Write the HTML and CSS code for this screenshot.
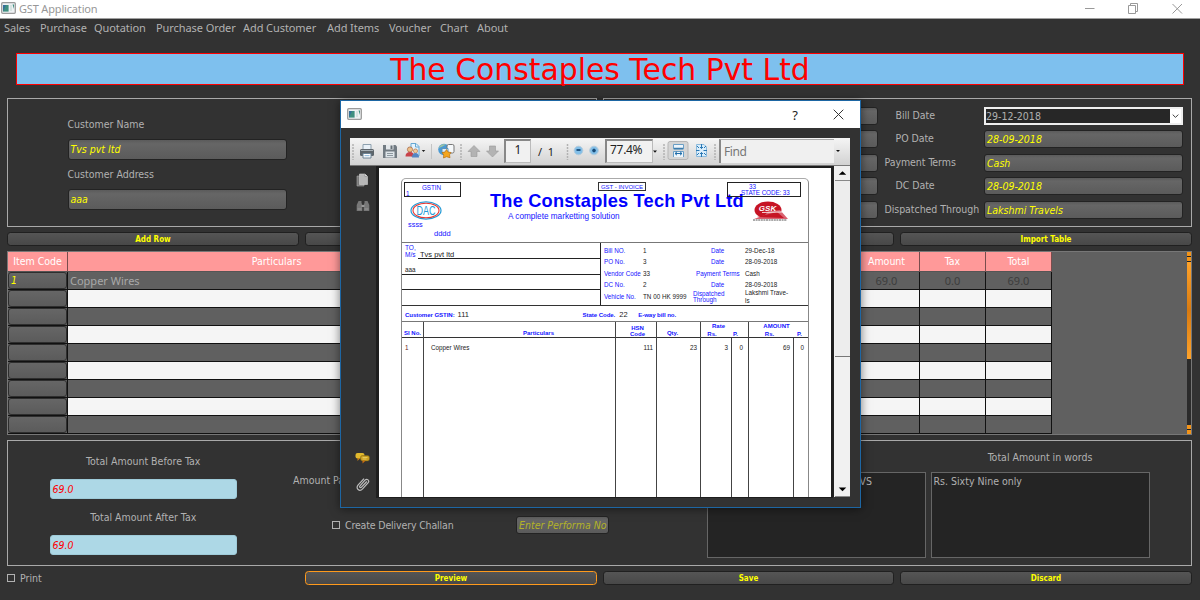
FILE: index.html
```html
<!DOCTYPE html>
<html lang="en">
<head>
<meta charset="utf-8">
<title>GST Application</title>
<link rel="stylesheet" href="styles.css">
</head>
<body>
<header class="titlebar">
  <svg class="appicon" width="15" height="12" viewBox="0 0 15 12"><rect x=".7" y=".7" width="13.6" height="10.6" rx="1" fill="#eef1f3" stroke="#9b9b9b" stroke-width="1.3"/><rect x="2" y="3" width="5.6" height="6.6" fill="#3f8f80"/><path d="M2 9.600L2 3L5 3Z" fill="#356f9a"/><path d="M9 3H11V9H9Z" fill="#d6e3e1"/><path d="M11.500 2.500H13V7Z" fill="#3f8f80"/></svg>
  <span class="apptitle">GST Application</span>
  <svg class="winbtns" width="100" height="14" viewBox="0 0 100 14" fill="none" stroke="#999" stroke-width="1"><path d="M1 6.500H10.500" stroke-width="1"/><path d="M44.500 3.500H51.500V11.500H44.500ZM46.500 3V1.500H53.500V9.500H52"/><path d="M88.500 2L98 11.500M98 2L88.500 11.500"/></svg>
</header>
<nav class="menu"><span>Sales</span><span>Purchase</span><span>Quotation</span><span>Purchase Order</span><span>Add Customer</span><span>Add Items</span><span>Voucher</span><span>Chart</span><span>About</span></nav>
<main class="app">
  <h1 class="banner">The Constaples Tech Pvt Ltd</h1>
  <section class="forms">
    <div class="group customer">
      <label>Customer Name</label><div class="field">Tvs pvt ltd</div>
      <label>Customer Address</label><div class="field">aaa</div>
    </div>
    <div class="group bill">
      <div class="field"></div><label class="in">Bill Date</label><div class="date"><span>29-12-2018</span><svg width="11" height="15" viewBox="0 0 11 15"><path d="M2.500 6L5.500 9L8.500 6" fill="none" stroke="#333"/></svg></div>
      <div class="field"></div><label class="in">PO Date</label><div class="field">28-09-2018</div>
      <div class="field"></div><label>Payment Terms</label><div class="field">Cash</div>
      <div class="field"></div><label class="in">DC Date</label><div class="field">28-09-2018</div>
      <div class="field"></div><label class="wide">Dispatched Through</label><div class="field">Lakshmi Travels</div>
    </div>
  </section>
  <div class="buttons"><button>Add Row</button><button></button><button></button><button>Import Table</button></div>
  <section class="tablebox">
    <table class="items">
      <colgroup><col class="c1"><col class="c2"><col class="c3"><col class="c4"><col class="c5"><col class="c5"></colgroup>
      <thead><tr><th class="code">Item Code</th><th>Particulars</th><th></th><th class="amt">Amount</th><th>Tax</th><th>Total</th></tr></thead>
      <tbody>
        <tr><td><div class="cell">1</div></td><td class="name">Copper Wires</td><td></td><td class="num amt">69.0</td><td class="num">0.0</td><td class="num">69.0</td></tr>
        <tr><td><div class="cell"></div></td><td></td><td></td><td></td><td></td><td></td></tr>
        <tr><td><div class="cell"></div></td><td></td><td></td><td></td><td></td><td></td></tr>
        <tr><td><div class="cell"></div></td><td></td><td></td><td></td><td></td><td></td></tr>
        <tr><td><div class="cell"></div></td><td></td><td></td><td></td><td></td><td></td></tr>
        <tr><td><div class="cell"></div></td><td></td><td></td><td></td><td></td><td></td></tr>
        <tr><td><div class="cell"></div></td><td></td><td></td><td></td><td></td><td></td></tr>
        <tr><td><div class="cell"></div></td><td></td><td></td><td></td><td></td><td></td></tr>
        <tr><td><div class="cell"></div></td><td></td><td></td><td></td><td></td><td></td></tr>
      </tbody>
    </table>
    <div class="vbar"><i class="end"></i><i class="thumb"></i><i class="track"></i><i class="end"></i></div>
  </section>
  <section class="group totals">
    <div class="sums">
      <label>Total Amount Before Tax</label><div class="field blue">69.0</div>
      <label>Total Amount After Tax</label><div class="field blue">69.0</div>
    </div>
    <div class="paid">
      <label>Amount Pa</label>
      <div class="challan"><i class="check"></i><span>Create Delivery Challan</span><div class="field hint">Enter Performa No</div></div>
    </div>
    <div class="words"><label></label><div class="area vs">VS</div></div>
    <div class="words"><label>Total Amount in words</label><div class="area">Rs. Sixty Nine only</div></div>
  </section>
  <div class="buttons foot"><div class="print"><i class="check"></i><span>Print</span></div><button class="active">Preview</button><button>Save</button><button>Discard</button></div>
</main>

<div class="dialog">
  <div class="dtitle">
    <svg class="appicon" width="15" height="12" viewBox="0 0 15 12"><rect x=".7" y=".7" width="13.6" height="10.6" rx="1" fill="#eef1f3" stroke="#9b9b9b" stroke-width="1.3"/><rect x="2" y="3" width="5.6" height="6.600" fill="#3f8f80"/><path d="M2 9.600L2 3L5 3Z" fill="#356f9a"/><path d="M9 3H11V9H9Z" fill="#d6e3e1"/><path d="M11.500 2.500H13V7Z" fill="#3f8f80"/></svg>
    <span class="q">?</span>
    <svg width="11" height="11" viewBox="0 0 11 11"><path d="M.7 .7L10.300 10.300M10.300 .7L.7 10.300" stroke="#333" stroke-width="1"/></svg>
  </div>
  <div class="viewer">
    <div class="toolbar">
      <svg class="tools" width="154" height="27" viewBox="0 0 154 27">
        <path d="M3 6V22M111 6V22" stroke="#b2b2b2" stroke-width="1.500" stroke-dasharray="2 1"/><path d="M81.500 6V21" stroke="#c4c4c4"/>
        <path d="M13 6.500H21V12H13Z" fill="#e9f1f8" stroke="#8da0ae"/><rect x="10" y="11" width="14" height="7" rx="1.500" fill="#5d656b"/><path d="M11 12.500H23" stroke="#a6afb5"/><path d="M13 15.500H21V20H13Z" fill="#fff" stroke="#6c8497"/><path d="M14.500 17.700H19.500" stroke="#83b2d8"/>
        <path d="M33 7H45.500L47 8.500V20H33Z" fill="#727b82"/><rect x="36" y="7" width="7.500" height="4.500" fill="#e4e8eb"/><rect x="40.500" y="7.500" width="2" height="3.500" fill="#677077"/><rect x="35.500" y="13.500" width="9" height="6" fill="#dfe5e9"/><path d="M37 15.500H43M37 17.500H43" stroke="#8d989f"/>
        <path d="M61 5.500H66L69 8.500V18H61Z" fill="#e4f3fd" stroke="#65a8d4"/><path d="M65.500 5.500V9H69" fill="none" stroke="#65a8d4"/><circle cx="60" cy="11.500" r="2.600" fill="#edc08a" stroke="#a2603a" stroke-width=".7"/><path d="M55.500 18.500Q55.500 14 60 14T64 18.500Z" fill="#c8434a"/><circle cx="65.500" cy="13" r="2.100" fill="#efca99" stroke="#ac6a3c" stroke-width=".6"/><path d="M62 19.500Q62 15 65.500 15T69 19.500Z" fill="#5486c2"/><path d="M71.800 12H75.300L73.500 14Z" fill="#222"/>
        <circle cx="94" cy="11.500" r="5.800" fill="#4b9ad4"/><path d="M88.500 10Q91 5 96 6.500Q92 9 88.500 10Z" fill="#9dc4a2"/><rect x="97" y="6.500" width="7" height="8.500" rx="1.500" fill="#f5f8fa" stroke="#777"/><path d="M92 10.500H98V14.500H92Z" fill="#dcecf8" stroke="#5b93bb"/><path d="M96.500 11.500L98 14L101 14.500L99.500 16.800L100 19.700L96.500 18.700L93.500 20L93.700 17L92 14.500L95 14Z" fill="#f4a51d" stroke="#b86f10" stroke-width=".7"/>
        <path d="M124 7.500L130 13.500H127V18.500H121V13.500H118Z" fill="#b3b3b3" stroke="#999" stroke-width=".6"/><path d="M142.500 19L148.500 13H145.500V8H139.500V13H136.500Z" fill="#b3b3b3" stroke="#999" stroke-width=".6"/>
      </svg>
      <div class="pageno">1</div><span class="pages">/&nbsp; 1</span>
      <svg class="zooms" width="51" height="27" viewBox="0 0 51 27"><path d="M13.500 6V22" stroke="#b2b2b2" stroke-width="1.500" stroke-dasharray="2 1"/><circle cx="24.500" cy="12.500" r="4.300" fill="#83bfe8" stroke="#b4cbdc"/><path d="M22.500 12H26.500" stroke="#174b79" stroke-width="1.800"/><circle cx="40" cy="12.500" r="4.300" fill="#83bfe8" stroke="#b4cbdc"/><path d="M38.200 12.500H41.800M40 10.700V14.300" stroke="#174b79" stroke-width="2"/></svg>
      <div class="pct">77.4%</div>
      <svg width="66" height="27" viewBox="0 0 66 27"><path d="M0 12.500H4L2 14.700Z" fill="#111"/><path d="M11 6V22M62 6V22" stroke="#b2b2b2" stroke-width="1.500" stroke-dasharray="2 1"/><rect x="15" y="3.500" width="20" height="18" rx="2" fill="#d5d5d5" stroke="#b5b5b5"/><path d="M20.500 6.500H30.500V11H20.500ZM20.500 19V13.500H30.500V19" fill="#eef6fc" stroke="#6a9fc6"/><path d="M21 10.500H30" stroke="#3d7cac" stroke-width="1.500"/><path d="M22 15.500H29M24 13.800L22 15.500L24 17.200M27 13.800L29 15.500L27 17.200" stroke="#216da9" fill="none"/><path d="M43.500 6.500H51L53.500 9V18.500H43.500Z" fill="#d9edfb" stroke="#8bbadc"/><path d="M48.500 6V10.500M47 9L48.500 10.500L50 9M48.500 19V14.500M47 16L48.500 14.500L50 16M43 12.500H46.500M54 12.500H50.500M44 8L46 10M53 17L51 15M53 8L51 10M44 17L46 15" stroke="#2a78b4" fill="none"/></svg>
      <div class="find">Find</div><i class="drop"></i>
    </div>
    <div class="vbody">
      <div class="side">
        <svg width="13" height="14" viewBox="0 0 13 14"><path d="M1 3H8V13H1Z" fill="#777" stroke="#aaa" stroke-width=".6"/><path d="M3.500 1H9L11.500 3.500V11.500H3.500Z" fill="#b7b7b7" stroke="#d0d0d0" stroke-width=".6"/><path d="M9 1V3.500H11.500" fill="#eee" stroke="#777" stroke-width=".5"/></svg>
        <svg class="bino" width="14" height="12" viewBox="0 0 14 12"><path d="M2.500 1H5.500V3L6.300 4.500V11H.7V5ZM8.500 1H11.500L13.300 5V11H7.700V4.500L8.500 3Z" fill="#777"/><path d="M5.500 5H8.500V7H5.500Z" fill="#999"/><path d="M1.500 9H5.500M8.500 9H12.500" stroke="#999"/></svg>
        <svg class="chat" width="15" height="12" viewBox="0 0 15 12"><rect x=".5" y="1" width="9" height="5.600" rx="2" fill="#e1b92d"/><path d="M2.500 6V9L5.500 6Z" fill="#c47f12"/><rect x="5.500" y="3.500" width="9" height="5.500" rx="2" fill="#c99d20" stroke="#6f5b18" stroke-width=".5"/><path d="M7.500 8.500V11.500L10.500 8.700Z" fill="#c86a12"/><path d="M7.500 5.500H12.500M7.500 7H11.500" stroke="#f4dd71" stroke-width=".7"/></svg>
        <svg width="14" height="16" viewBox="0 0 14 16"><path d="M10.800 5.500L5.500 11.200C4.400 12.400 2.900 11 4 9.800L9 4.200C11 2 14 4.600 12 6.900L6.600 12.800C3.500 16.200-.8 12.500 2 9.200L8 2.600" fill="none" stroke="#bebebe" stroke-width="1.200"/></svg>
      </div>
      <div class="paper">
        <div class="invoice">
          <div class="ihead">
            <div class="ileft"><div class="gstin"><b>GSTIN</b><span>1</span></div>
              <svg width="33" height="20" viewBox="0 0 33 20"><ellipse cx="16" cy="9.500" rx="15" ry="8.600" fill="#fff" stroke="#239ad5" stroke-width="1.200"/><ellipse cx="16" cy="9.500" rx="13" ry="7.300" fill="none" stroke="#e63732" stroke-width="1.100"/><text x="16" y="14" text-anchor="middle" textLength="19" lengthAdjust="spacingAndGlyphs" class="dac">DAC</text></svg>
              <div class="ssss">ssss</div><div class="dddd">dddd</div></div>
            <div class="imid"><span class="gst">GST - INVOICE</span><h2>The Constaples Tech Pvt Ltd</h2><p>A complete marketting solution</p></div>
            <div class="iright"><div class="state"><span>33</span><span class="sc">STATE CODE: 33</span></div>
              <svg width="36" height="21" viewBox="0 0 36 21"><ellipse cx="15" cy="9" rx="13.500" ry="8.500" fill="#c61424"/><path d="M15 10.500L27 9L35 18H1L12 14Z" fill="#d96170"/><path d="M4 16L24 11L31 17Z" fill="#c61424"/><path d="M9 11.500L29 11" stroke="#fff" stroke-width=".8"/><text x="14.500" y="9.500" text-anchor="middle" class="gsk">GSK</text><path d="M0 19H34" stroke="#555" stroke-dasharray="2 .6"/></svg></div>
          </div>
          <div class="iinfo">
            <div class="to"><div class="l1"><span class="ms">TO,<br>M/s</span><span class="nm">Tvs pvt ltd</span></div><div class="l2">aaa</div><div class="l3"></div><div></div></div>
            <div class="meta">
              <i>Bill NO.</i><span>1</span><i class="c">Date</i><span>29-Dec-18</span>
              <i>PO No.</i><span>3</span><i class="c">Date</i><span>28-09-2018</span>
              <i>Vendor Code</i><span>33</span><i class="p">Payment Terms</i><span>Cash</span>
              <i>DC No.</i><span>2</span><i class="c">Date</i><span>28-09-2018</span>
              <i>Vehicle No.</i><span>TN 00 HK 9999</span><i class="d">Dispatched<br>Through</i><span class="lt">Lakshmi Trave-<br>ls</span>
            </div>
          </div>
          <div class="cust"><b>Customer GSTIN:</b><span class="g">111</span><b>State Code.</b><span class="s">22</span><b>E-way bill no.</b></div>
          <div class="lines head"><b>SI No.</b><b class="part">Particulars</b><b class="hsn">HSN<br>Code</b><b class="qty">Qty.</b><div class="two rate"><b>Rate</b><b>Rs.</b><b>P.</b></div><div class="two amount"><b>AMOUNT</b><b>Rs.</b><b>P.</b></div></div>
          <div class="lines rowx"><span class="n">1</span><span class="cw">Copper Wires</span><span>111</span><span>23</span><span class="rs">3</span><span class="z">0</span><span>69</span><span class="z">0</span></div>
        </div>
      </div>
      <div class="scroll"><svg width="15" height="15" viewBox="0 0 15 15"><path d="M3.500 9.500H11.500L7.500 5.500Z"/></svg><i></i><svg class="dn" width="15" height="15" viewBox="0 0 15 15"><path d="M3.500 6H11.500L7.500 10Z"/></svg></div>
    </div>
  </div>
</div>
</body>
</html>
```
FILE: styles.css
```css
* { box-sizing: border-box; }
html, body { margin: 0; }
body { width: 1200px; height: 600px; overflow: hidden; background: #323232; color: #b1b1b1; font: 10.5px/14px "DejaVu Sans Condensed", "DejaVu Sans", sans-serif; white-space: nowrap; }
svg { display: block; flex: none; }
i { font-style: normal; }

.titlebar { height: 19px; background: #fff; border-bottom: 1px solid #a0a0a0; display: flex; align-items: center; padding-left: 1px; }
.titlebar .appicon { margin-top: -2px; }
.apptitle { font: 11px/16px "Noto Sans", sans-serif; color: #979797; margin: -1px 0 0 3px; letter-spacing: -.17px; }
.winbtns { margin-left: auto; margin-right: 16px; }
.menu { height: 20px; padding-left: 4px; display: grid; grid-template-columns: 36px 54px 62px 87px 84px 62px 51px 37px 40px; font: 11px/18px "Noto Sans", sans-serif; letter-spacing: -.08px; }

.app { padding: 14px 8px 0 7px; }
.banner { margin: 0 1px 13px 9px; width: 1168px; height: 32px; border: 1px solid #f00; background: #7ec0ee; color: #f00; font: 29.850px/30px "DejaVu Sans", sans-serif; text-align: center; padding-top: 1px; }
.group { border: 1px solid #a9a9a9; }
.forms { display: flex; gap: 6px; height: 129px; }
.customer { width: 590px; padding: 18px 59.500px; }
.customer label { display: block; height: 23px; }
.field { border: 1px solid #232323; border-radius: 3px; background: linear-gradient(#5b5b5b, #666 20%, #5b5b5b); color: #ff0; font-style: italic; padding-left: 2px; }
.customer .field { width: 219px; height: 21px; line-height: 19px; margin: -1px 0 7px; }
.bill { flex: 1; padding: 8px 0 0 60px; display: grid; grid-template-columns: 214px 106px 199px; grid-template-rows: repeat(5, 23.400px); }
.bill label { padding-left: 6.500px; line-height: 17px; letter-spacing: -.05px; }
.bill label.in { padding-left: 17.500px; }
.bill .field { height: 18px; line-height: 16px; }
.bill .field:nth-child(3n+1) { width: 214px; }
.date { height: 18px; border: 2px solid #eee; background: #272727; display: flex; justify-content: space-between; line-height: 15px; }
.date svg { background: #fff; height: 14px; }
.buttons { display: grid; grid-template-columns: 292px 292px 291px 292px; gap: 6px; height: 14px; margin-top: 5px; }
button { font: bold 8px/11px "DejaVu Sans Condensed", "DejaVu Sans", sans-serif; color: #ff0; padding: 0; border: 1px solid #202020; border-radius: 3.500px; background: linear-gradient(#555, #484848); }
.active { border-color: #ff9a1c; }

.tablebox { margin-top: 5px; height: 184px; border: 1px solid #777; background: #606060; display: flex; justify-content: space-between; overflow: hidden; }
.items { border-collapse: separate; border-spacing: 0; table-layout: fixed; width: 1044px; height: 182px; }
.c1 { width: 60px; } .c2 { width: 418px; } .c3 { width: 368px; } .c4 { width: 66px; } .c5 { width: 66px; }
.items th { height: 20px; padding: 0; background: #ff9999; color: #fff; font-weight: normal; border-right: 1px solid #7a4d4d; border-bottom: 1px solid #555; line-height: 19px; }
.items td { height: 18px; padding: 0; border-right: 1px solid #111; border-bottom: 1px solid #111; line-height: 15px; }
.items tr:nth-child(even) td { background: #f5f5f5; }
.items tr:nth-child(even) td:first-child { background: #606060; }
.items .name { padding-left: 2px; font: 11px/15px "Noto Sans", sans-serif; color: #a8a8a8; }
.items .num { text-align: center; font: 11px/15px "Noto Sans", sans-serif; color: #3d3d3d; }
.cell { height: 17px; border: 1px solid #2e2e2e; border-radius: 3px; background: linear-gradient(#666, #5b5b5b); color: #ff0; font-style: italic; padding-left: 2px; }
.vbar { width: 4px; display: flex; flex-direction: column; }
.end { height: 9px; background: repeating-linear-gradient(#f49418 0 4px, #222 4px 5px); }
.thumb { height: 98px; background: linear-gradient(#ffa32a, #d87a10 50%, #ffa32a); border-top: 1px solid #222; }
.track { flex: 1; background: #2b2b2b; }

.totals { margin-top: 5px; height: 126px; display: flex; }
.sums { width: 278px; padding: 11.500px 49px 0 41.500px; text-align: center; }
.sums label { display: block; height: 26px; line-height: 16px; }
.field.blue { width: 187px; height: 20px; background: #add8e6; border-color: #9fcbd9; color: #f00; text-align: left; line-height: 19px; margin-bottom: 10px; }
.paid { width: 420px; padding: 32px 0 0 7px; }
.paid label { display: block; height: 43px; }
.challan { display: flex; align-items: center; padding-left: 39px; }
.check { width: 8px; height: 8px; border: 1px solid #b1b1b1; flex: none; }
.challan span { margin-left: 5px; width: 171px; letter-spacing: -.15px; }
.field.hint { width: 93px; height: 18px; line-height: 17px; color: #b3b328; }
.words { width: 219px; margin: 8px 5px 0 0; text-align: center; }
.words label { display: block; height: 23px; line-height: 17px; }
.paid + .words { margin-left: .500px; }
.area { height: 86px; border: 1px solid #666; background: #242424; text-align: left; padding: 1px 2px; }
.area.vs { padding-left: 152px; }
.foot { margin-top: 5px; }
.print { display: flex; align-items: center; gap: 5px; }

.dialog { position: absolute; left: 340px; top: 100px; width: 521px; height: 408px; border: 1px solid #1d66a3; background: #323232; box-shadow: 0 1px 9px rgba(0,0,0,.5); }
.dtitle { height: 27px; background: #fff; display: flex; align-items: center; padding: 0 16px 0 6px; }
.dtitle .appicon { margin-top: -1px; }
.q { margin: 0 35px 0 auto; color: #222; font: 13px/20px "Noto Sans", sans-serif; }
.viewer { margin: 10px 0 0 9px; width: 500px; }
.toolbar { height: 28px; background: linear-gradient(#f5f5f5, #d2d2d2); border-bottom: 1px solid #777; display: flex; font: 12px/23px "Noto Sans", sans-serif; color: #222; }
.pageno, .pct { height: 24px; margin-top: 1px; background: #f1f1f1; border: 1px solid #bbb; border-top: 2px solid #888; border-left: 2px solid #888; line-height: 18px; }
.pageno { width: 27px; text-align: center; font-size: 12px; }
.pages { width: 43px; padding-left: 7px; line-height: 27px; font-size: 11px; }
.zooms { margin-left: -20px; }
.pct { width: 48px; padding-left: 3px; letter-spacing: -.3px; }
.find { width: 115px; height: 24px; margin: 1px 0 0 0; background: #f0f0f0; border-left: 2px solid #888; border-top: 1px solid #aaa; padding-left: 3px; color: #777; letter-spacing: -.4px; }
.drop { border: 2px solid transparent; border-top-color: #111; margin: 12px 0 0 2px; height: 2px; }
.vbody { display: flex; height: 332px; margin-top: 0; }
.side { width: 28px; border-right: 2px solid #1e1e1e; padding: 7px 0 0 6px; }
.bino { margin-top: 13px; }
.chat { margin: 240px 0 12px -1px; }
.paper { width: 455px; border: 1px solid #1e1e1e; border-top-width: 2px; border-right-width: 2px; background: #fff; overflow: hidden; color: #222; font: 6.300px/8px "Liberation Sans", sans-serif; padding: 10px 0 0 22px; }
.invoice { width: 408px; height: 330px; border: 1px solid #888; border-top: 1.500px solid #aaa; border-radius: 5px 5px 0 0; }
.invoice b, .meta i, .ihead { color: #1414ff; }
.ihead { height: 64px; display: flex; border-bottom: 1px solid #777; }
.ileft { width: 88px; padding: 3px 0 0 2px; }
.gstin { width: 57px; height: 15px; border: 1px solid #222; display: flex; flex-direction: column; line-height: 6px; padding: 1px 1px 0; }
.gstin b { font-weight: normal; text-align: center; line-height: 7px; padding-right: 2px; }
.ileft svg { margin: 4px 0 0 6px; }
.dac { font: 12px "Liberation Sans", sans-serif; fill: #239ad5; }
.ssss { padding-left: 4px; font-size: 7.400px; line-height: 8px; }
.dddd { padding-left: 30px; font-size: 7.500px; line-height: 7px; padding-top: 1px; }
.imid { width: 237px; padding-top: 3px; }
.gst { display: block; width: 48px; height: 9px; margin-left: 108px; border: 1px solid #333; text-align: center; line-height: 8px; font-size: 6px; }
.imid h2 { margin: 0; font-size: 18.200px; line-height: 20px; letter-spacing: .21px; color: #00f; }
.imid p { margin: 0 0 0 18px; font-size: 8.200px; line-height: 12px; }
.iright { padding-top: 3px; }
.state { width: 74px; height: 15px; border: 1px solid #222; line-height: 6px; padding: 1px 0 0 13px; }
.state span { display: block; padding-left: 8px; }
.state .sc { padding: 0; letter-spacing: -.08px; }
.iright svg { margin: 4px 0 0 26px; }
.gsk { font: italic bold 8px "Liberation Sans", sans-serif; fill: #fff; }
.iinfo { display: flex; height: 63px; border-bottom: 1px solid #333; }
.to { width: 199px; border-right: 1px solid #222; display: grid; grid-template-rows: 16px 15.500px 15.500px 15px; }
.l1 { display: flex; }
.ms { color: #1414ff; width: 16px; padding-left: 3px; line-height: 7px; font-size: 6.500px; padding-top: 1px; }
.nm { flex: 1; border-bottom: 1px solid #222; padding: 8px 0 0 2px; line-height: 7px; font-size: 7.500px; }
.l2, .l3 { border-bottom: 1px solid #222; padding: 7px 0 0 3px; }
.meta { flex: 1; padding: 1.500px 0 0 3px; display: grid; grid-template-columns: 39px 50px 52px 1fr; grid-template-rows: repeat(5, 11.500px); line-height: 11px; }
.meta .c { padding-left: 18px; }
.meta .p { padding-left: 3px; }
.meta .d, .meta .lt { line-height: 6px; }
.meta .lt { line-height: 8px; margin-top: -1.500px; }
.cust { height: 16px; border-bottom: 1px solid #777; display: flex; line-height: 18px; padding-left: 3px; font-size: 6.100px; letter-spacing: -.08px; }
.cust span { font-size: 7.500px; line-height: 18px; padding-left: 3px; letter-spacing: 0; }
.cust .g { width: 128px; } .cust .s { width: 23px; padding-left: 4px; }
.lines { display: grid; grid-template-columns: 22px 192px 41px 44px 31px 17px 45px 15px; }
.lines > * { border-right: 1px solid #444; }
.lines > :last-child { border-right: 0; }
.head { height: 16px; border-bottom: 1px solid #333; text-align: center; font-size: 6px; line-height: 6px; }
.head > b { padding-top: 3px; }
.head > b:first-child, .head .part, .head .qty { padding-top: 8px; }
.head .part { padding-left: 38px; }
.head .hsn { padding-left: 3px; }
.head .qty { padding-right: 12px; }
.two { display: grid; grid-template-columns: 1fr 1fr; grid-template-rows: 8px 7px; line-height: 7px; padding-top: 1px; }
.two b:first-child { grid-column: 1 / 3; }
.rate { grid-column: 5 / 7; } .amount { grid-column: 7 / 9; }
.two.rate { grid-template-columns: 22px 1fr; padding-right: 0; }
.rate b:first-child { padding-right: 12px; }
.two.amount { grid-template-columns: 41px 1fr; }
.amount b:first-child { padding-right: 5px; }
.rowx { height: 170px; text-align: right; }
.rowx span { padding: 6px 3px 0 0; }
.rowx .n { text-align: left; padding-left: 3px; color: #622; }
.rowx .cw { text-align: left; padding-left: 7px; }
.rowx .z { padding-right: 5px; }
.scroll { width: 17px; padding-left: 1px; height: 331px; background: #f1f1f1; border-left: 1px solid #222; display: flex; flex-direction: column; justify-content: space-between; }
.scroll svg { background: #f0f0f0; border-bottom: 1px solid #888; }
.scroll i { height: 176px; border-bottom: 1px solid #777; margin-bottom: auto; background: #ededed; }
.scroll svg path { fill: #000; }
```
